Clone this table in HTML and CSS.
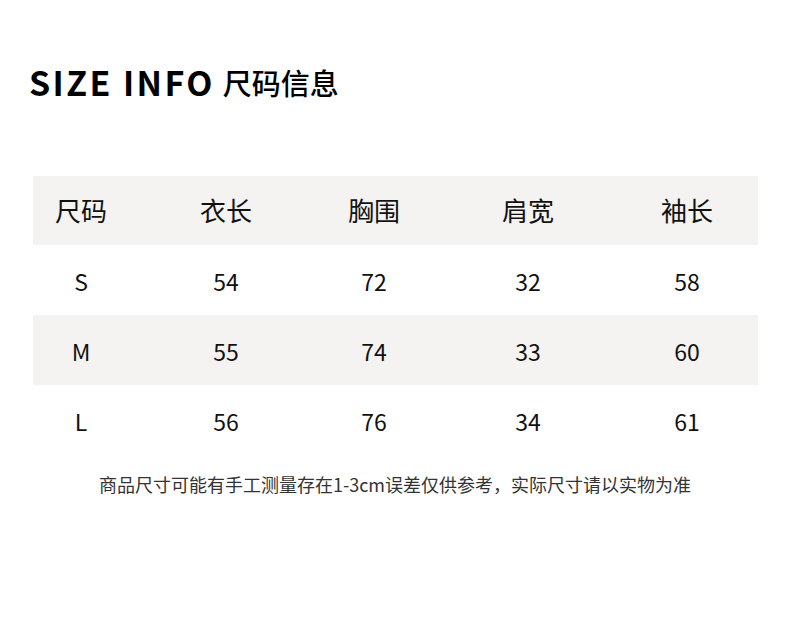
FILE: index.html
```html
<!DOCTYPE html>
<html lang="zh-CN">
<head>
<meta charset="utf-8">
<title>SIZE INFO 尺码信息</title>
<link rel="stylesheet" href="styles.css">
</head>
<body>
<div class="page">
  <h1 class="title"><span class="title-en">SIZE INFO</span><span class="title-cn">尺码信息</span></h1>
  <div class="table">
    <div class="row head">
      <div class="cell">尺码</div><div class="cell">衣长</div><div class="cell">胸围</div><div class="cell">肩宽</div><div class="cell">袖长</div>
    </div>
    <div class="row">
      <div class="cell">S</div><div class="cell">54</div><div class="cell">72</div><div class="cell">32</div><div class="cell">58</div>
    </div>
    <div class="row shade">
      <div class="cell">M</div><div class="cell">55</div><div class="cell">74</div><div class="cell">33</div><div class="cell">60</div>
    </div>
    <div class="row">
      <div class="cell">L</div><div class="cell">56</div><div class="cell">76</div><div class="cell">34</div><div class="cell">61</div>
    </div>
  </div>
  <p class="note">商品尺寸可能有手工测量存在1-3cm误差仅供参考，实际尺寸请以实物为准</p>
</div>
</body>
</html>
```

FILE: styles.css
```css
html, body {
  margin: 0;
  padding: 0;
  background: #ffffff;
}
.page {
  width: 790px;
  height: 618px;
  font-family: "Noto Sans CJK SC", "Noto Sans", sans-serif;
  color: #111;
}
.title {
  margin: 0;
  padding: 57px 0 0 29px;
  height: 50px;
  display: flex;
  align-items: center;
  gap: 8px;
  font-weight: 700;
  line-height: 50px;
}
.title-en {
  font-family: "Noto Sans CJK SC", sans-serif;
  font-size: 34px;
  font-weight: 700;
  letter-spacing: 2.4px;
  color: #000;
}
.title-cn {
  font-size: 29px;
  font-weight: 500;
  color: #000;
}
.table {
  margin: 69px 0 0 33px;
  width: 725px;
}
.row {
  display: grid;
  grid-template-columns: 96px 194px 102px 206px 112px;
  padding-right: 15px;
  height: 70px;
  align-items: center;
}
.row.head {
  height: 69px;
  background: #f4f3f1;
}
.row.shade {
  background: #f4f3f1;
}
.cell {
  text-align: center;
  font-size: 23px;
  font-weight: 400;
  color: #111;
  line-height: 1;
  padding-top: 3px;
}
.row.head .cell {
  font-size: 26px;
  padding-top: 0;
  padding-bottom: 2px;
}
.note {
  margin: 17px 0 0;
  text-align: center;
  font-size: 18px;
  color: #333;
  line-height: 24px;
}
```
